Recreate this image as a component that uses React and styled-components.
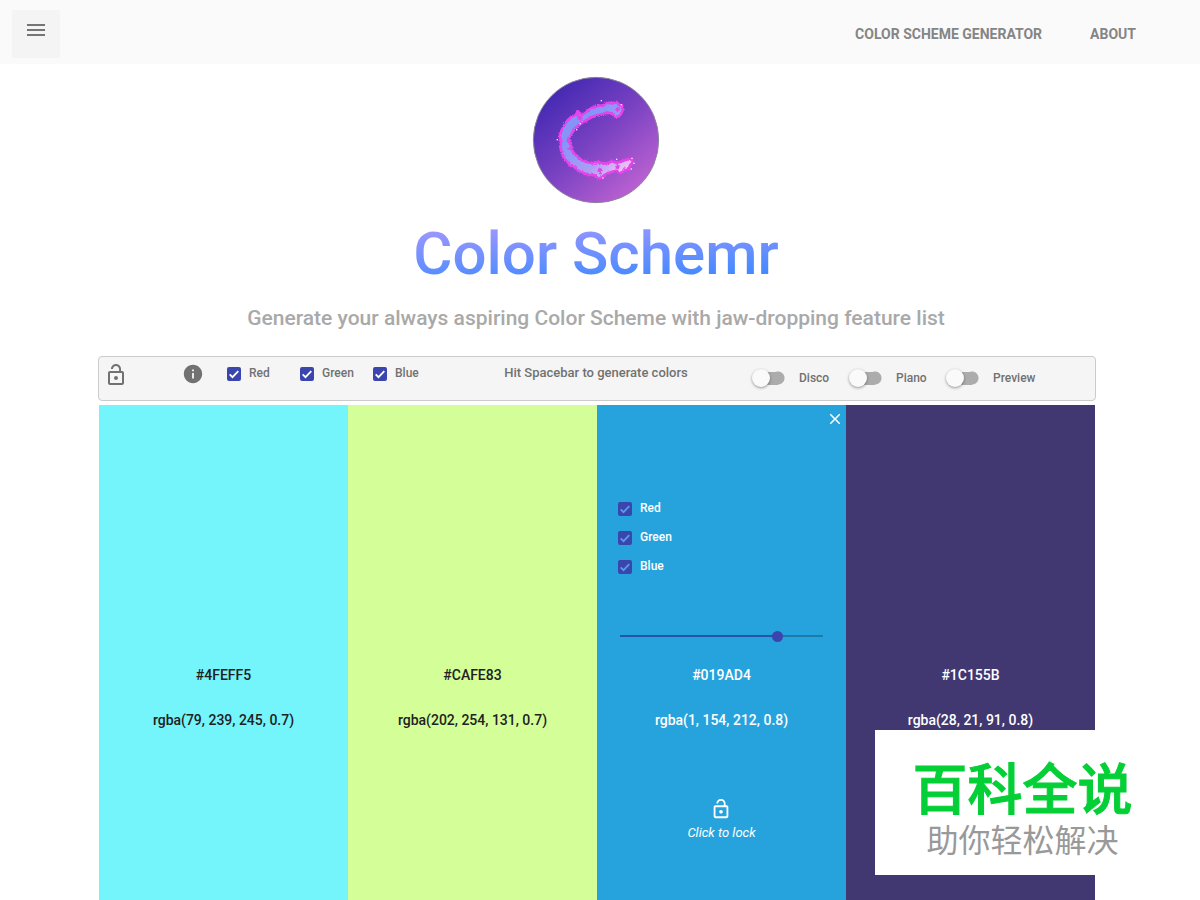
import React, { useState } from "react";
import styled, { createGlobalStyle } from "styled-components";

const GlobalStyle = createGlobalStyle`
  *, *::before, *::after { box-sizing: border-box; }
  body {
    margin: 0;
    background: #ffffff;
    font-family: Roboto, "Noto Sans CJK SC", sans-serif;
    font-weight: 500;
  }
  h1, h2, p { margin: 0; }
  button {
    border: 0;
    padding: 0;
    background: none;
    color: inherit;
    font: inherit;
    cursor: pointer;
  }
`;

const Page = styled.div`
  position: relative;
  display: flex;
  flex-direction: column;
  min-height: 100vh;
`;

const TopBar = styled.header`
  display: flex;
  align-items: center;
  justify-content: space-between;
  height: 64px;
  padding: 4px 64px 0 12px;
  background: #fafafa;
`;

const MenuButton = styled.button`
  display: flex;
  justify-content: center;
  width: 48px;
  height: 48px;
  && { padding-top: 8px; background: #f4f4f4; }
  && { color: #757575; }
`;

const Nav = styled.nav`
  display: flex;
  gap: 48px;
`;

const NavLink = styled.a`
  color: #858585;
  font-size: 14px;
  font-weight: 700;
  line-height: 20px;
  text-decoration: none;
`;

const Hero = styled.section`
  display: flex;
  flex-direction: column;
  align-items: center;
  padding: 12px 8px 0 0;
`;

const Title = styled.h1`
  margin-top: 12px;
  font-size: 60px;
  font-weight: 500;
  line-height: 76px;
  color: transparent;
  background: linear-gradient(177deg, #a598ff 10%, #448aff 78%);
  background-clip: text;
`;

const Subtitle = styled.h2`
  margin-top: 12px;
  color: #a9a9a9;
  font-size: 21px;
  font-weight: 500;
  line-height: 28px;
`;

const Generator = styled.main`
  display: flex;
  flex: 1;
  flex-direction: column;
  gap: 4px;
  padding: 24px 104px 0 98px;
`;

const Toolbar = styled.div`
  display: grid;
  grid-template-columns: 78fr 45fr 219fr 306fr 343fr;
  height: 45px;
  padding: 6px 0 0 5px;
  border: 1px solid #cbcbcb;
  border-radius: 4px;
  background: #f5f5f5;
  color: #717171;
  font-size: 12px;
  line-height: 20px;
`;

const IconButton = styled.button`
  display: flex;
  align-items: flex-start;
  justify-content: flex-start;
`;

const CheckGroup = styled.div`
  display: flex;
  flex-direction: ${(p) => (p.$stacked ? "column" : "row")};
  gap: ${(p) => (p.$stacked ? "9px" : "0")};
`;

const CheckLabel = styled.label`
  display: flex;
  align-items: center;
  gap: 8px;
  width: 73px;
  height: 20px;
  line-height: 20px;
`;

const CheckBox = styled.span`
  display: grid;
  width: 14px;
  height: 14px;
  margin-top: 2px;
  & > * { grid-area: 1 / 1; }
  svg { pointer-events: none; }
`;

const CheckInput = styled.input`
  width: 14px;
  height: 14px;
  margin: 0;
  appearance: none;
  border: 2px solid #3a46ad;
  border-radius: 2px;
  &:checked { background: #3a46ad; }
  &:not(:checked) + svg { visibility: hidden; }
`;

const Hint = styled.p`
  padding-right: 6px;
  text-align: center;
  font-size: 13px;
`;

const SwitchGroup = styled.div`
  display: flex;
  padding-top: 5px;
`;

const SwitchLabel = styled.label`
  display: flex;
  align-items: center;
  gap: 14px;
  width: 97px;
  height: 20px;
`;

const SwitchInput = styled.input`
  display: flex;
  align-items: center;
  width: 33px;
  height: 18px;
  margin: 0;
  appearance: none;
  background: radial-gradient(circle at 26px 9px, #acacac 6px, transparent 7px),
    linear-gradient(#acacac, #acacac) 9px 3px / 17px 13px no-repeat;
  &::before {
    content: "";
    width: 18px;
    height: 18px;
    border-radius: 50%;
    background: #fafafa;
    box-shadow: 0 1px 3px rgba(0, 0, 0, 0.4);
  }
  &:checked { justify-content: flex-end; }
`;

const Palette = styled.div`
  display: grid;
  flex: 1;
  grid-template-columns: repeat(4, 1fr);
  min-height: 480px;
  padding: 0 1px;
`;

const Swatch = styled.section`
  display: flex;
  flex-direction: column;
  background: ${(p) => p.$fill};
  color: ${(p) => p.$ink};
  text-align: center;
`;

const Controls = styled.div`
  display: flex;
  flex-direction: column;
  height: 258px;
  padding: 0 21px;
  font-size: 12px;
  text-align: left;
`;

const CloseButton = styled.button`
  align-self: flex-end;
  width: 18px;
  height: 18px;
  margin: 5px -19px 70px 0;
`;

const Slider = styled.input`
  height: 12px;
  margin: 54px 2px 0;
  appearance: none;
  background: linear-gradient(90deg, #2553a8 78%, #1b7ca8 78%) center / 100% 2px no-repeat;
  &::-webkit-slider-thumb {
    width: 11px;
    height: 11px;
    appearance: none;
    border-radius: 50%;
    background: #3a46ad;
  }
`;

const ColorCode = styled.p`
  height: 45px;
  font-size: 14px;
  line-height: 24px;
`;

const LockButton = styled.button`
  display: flex;
  flex-direction: column;
  align-items: center;
  align-self: center;
  gap: 5px;
  margin-top: 45px;
  && {
    font-size: 13px;
    font-style: italic;
    font-weight: 400;
    line-height: 16px;
  }
`;

const Watermark = styled.aside`
  position: absolute;
  right: 30px;
  bottom: 25px;
  width: 295px;
  height: 145px;
  padding-top: 28px;
  background: #ffffff;
  text-align: center;
`;

const WatermarkName = styled.p`
  color: #05cf36;
  font-size: 55px;
  font-weight: 500;
  line-height: 64px;
  -webkit-text-stroke: 1px #05cf36;
`;

const WatermarkLine = styled.p`
  color: #999999;
  font-size: 32px;
  font-weight: 400;
  line-height: 38px;
`;

const MenuIcon = () => (
  <svg width="24" height="24" viewBox="0 0 24 24" fill="currentColor" aria-hidden="true">
    <path d="M3 18h18v-2H3v2zm0-5h18v-2H3v2zm0-7v2h18V6H3z" />
  </svg>
);

const LockOpenIcon = ({ size }) => (
  <svg width={size} height={size} viewBox="0 0 24 24" fill="currentColor" aria-hidden="true">
    <path d="M12 17c1.1 0 2-.9 2-2s-.9-2-2-2-2 .9-2 2 .9 2 2 2zm6-9h-1V6c0-2.76-2.24-5-5-5S7 3.24 7 6h1.9c0-1.71 1.39-3.1 3.1-3.1 1.71 0 3.1 1.39 3.1 3.1v2H6c-1.1 0-2 .9-2 2v10c0 1.1.9 2 2 2h12c1.1 0 2-.9 2-2V10c0-1.1-.9-2-2-2zm0 12H6V10h12v10z" />
  </svg>
);

const InfoIcon = () => (
  <svg width="22" height="22" viewBox="0 0 24 24" fill="currentColor" aria-hidden="true">
    <path d="M12 2C6.48 2 2 6.48 2 12s4.48 10 10 10 10-4.48 10-10S17.52 2 12 2zm1 15h-2v-6h2v6zm0-8h-2V7h2v2z" />
  </svg>
);

const CloseIcon = () => (
  <svg width="18" height="18" viewBox="0 0 24 24" fill="currentColor" aria-hidden="true">
    <path d="M19 6.41L17.59 5 12 10.59 6.41 5 5 6.41 10.59 12 5 17.59 6.41 19 12 13.41 17.59 19 19 17.59 13.41 12z" />
  </svg>
);

const Logo = () => (
  <svg width="128" height="128" viewBox="36 33 384 384" role="img" aria-label="Color Schemr logo">
    <defs>
      <linearGradient id="disc" x1="0.15" y1="0.1" x2="0.85" y2="0.9">
        <stop offset="0" stopColor="#4329b2" />
        <stop offset="0.5" stopColor="#7a42c2" />
        <stop offset="1" stopColor="#bd62d2" />
      </linearGradient>
      <linearGradient id="brush" x1="0" y1="0" x2="1" y2="1">
        <stop offset="0.3" stopColor="#8794f7" />
        <stop offset="0.65" stopColor="#ab9ff5" />
        <stop offset="0.9" stopColor="#f3c2f5" />
      </linearGradient>
      <filter id="ragged" x="-10%" y="-10%" width="120%" height="120%">
        <feTurbulence type="fractalNoise" baseFrequency="0.28" numOctaves="2" seed="4" />
        <feDisplacementMap in="SourceGraphic" scale="9" xChannelSelector="R" yChannelSelector="G" />
      </filter>
    </defs>
    <circle cx="228" cy="225" r="188" fill="url(#disc)" stroke="#8b829b" strokeWidth="3" />
    <g filter="url(#ragged)">
      <path
        d="M172 139L186 149L200 140L212 130L222 127L235 122L250 121L262 113L278 115L290 111L297 120L307 124L308 135L302 148L295 155L285 155L277 146L262 143L248 146L232 151L214 157L200 165L188 172L178 180L165 190L156 204L149 218L147 229L153 241L155 253L161 264L174 276L185 285L200 291L218 295L232 291L248 295L262 295L276 289L290 293L306 289L322 283L337 283L338 292L330 301L326 314L313 317L302 325L288 317L274 321L258 327L245 337L234 341L225 331L208 329L192 325L177 319L164 307L150 301L142 290L132 280L125 263L121 246L123 228L119 212L125 196L133 180L143 166L156 154L168 150Z"
        fill="url(#brush)"
        stroke="#e344ea"
        strokeWidth="8"
        strokeLinejoin="round"
      />
      <path
        d="M176 150l10 8-4 8-8-6zM143 220l6 4-3 8-6-4zM148 246l6-2-2 8-6 0zM290 300l8 3-4 8-7-3zM238 310l8 4-6 6-6-2zM292 128l7 3-6 8-5-5zM236 326l10 0M310 312l6-6"
        fill="#b658e8"
        stroke="#e344ea"
        strokeWidth="4"
      />
    </g>
    <g fill="#fbe5ff">
      <rect x="242" y="105" width="4" height="4" />
      <rect x="302" y="117" width="4" height="4" />
      <rect x="110" y="222" width="4" height="4" />
      <rect x="179" y="174" width="4" height="4" />
      <rect x="168" y="192" width="4" height="4" />
      <rect x="334" y="278" width="4" height="4" />
      <rect x="340" y="293" width="4" height="4" />
      <rect x="247" y="337" width="4" height="4" />
      <rect x="332" y="310" width="4" height="4" />
      <rect x="288" y="281" width="4" height="4" />
    </g>
  </svg>
);

function Check({ label, tick = "#ffffff" }) {
  return (
    <CheckLabel>
      <CheckBox>
        <CheckInput type="checkbox" defaultChecked />
        <svg width="14" height="14" viewBox="0 0 14 14" fill="none" stroke={tick} strokeWidth="1.8">
          <path d="M2.7 7.3l2.8 2.8 5.8-6" />
        </svg>
      </CheckBox>
      {label}
    </CheckLabel>
  );
}

const CHANNELS = ["Red", "Green", "Blue"];
const MODES = ["Disco", "Piano", "Preview"];
const COLORS = [
  { hex: "#4FEFF5", rgba: "rgba(79, 239, 245, 0.7)", fill: "#73f5fb", ink: "#212121" },
  { hex: "#CAFE83", rgba: "rgba(202, 254, 131, 0.7)", fill: "#d4fe98", ink: "#212121" },
  { hex: "#019AD4", rgba: "rgba(1, 154, 212, 0.8)", fill: "#26a3dc", ink: "#ffffff", open: true },
  { hex: "#1C155B", rgba: "rgba(28, 21, 91, 0.8)", fill: "#413871", ink: "#ffffff" },
];

function ColorSwatch({ color }) {
  const [open, setOpen] = useState(Boolean(color.open));
  return (
    <Swatch $fill={color.fill} $ink={color.ink}>
      <Controls>
        {open && (
          <>
            <CloseButton aria-label="Close" onClick={() => setOpen(false)}>
              <CloseIcon />
            </CloseButton>
            <CheckGroup $stacked>
              {CHANNELS.map((name) => (
                <Check key={name} label={name} tick="#5b9be8" />
              ))}
            </CheckGroup>
            <Slider type="range" aria-label="Opacity" min="0" max="100" defaultValue="79" />
          </>
        )}
      </Controls>
      <ColorCode>{color.hex}</ColorCode>
      <ColorCode>{color.rgba}</ColorCode>
      {open && (
        <LockButton>
          <LockOpenIcon size={22} />
          Click to lock
        </LockButton>
      )}
    </Swatch>
  );
}

export default function App() {
  return (
    <Page>
      <GlobalStyle />
      <TopBar>
        <MenuButton aria-label="Menu">
          <MenuIcon />
        </MenuButton>
        <Nav>
          <NavLink href="#generator">COLOR SCHEME GENERATOR</NavLink>
          <NavLink href="#about">ABOUT</NavLink>
        </Nav>
      </TopBar>
      <Hero>
        <Logo />
        <Title>Color Schemr</Title>
        <Subtitle>Generate your always aspiring Color Scheme with jaw-dropping feature list</Subtitle>
      </Hero>
      <Generator id="generator">
        <Toolbar>
          <IconButton aria-label="Unlock all">
            <LockOpenIcon size={24} />
          </IconButton>
          <IconButton aria-label="Information">
            <InfoIcon />
          </IconButton>
          <CheckGroup>
            {CHANNELS.map((name) => (
              <Check key={name} label={name} />
            ))}
          </CheckGroup>
          <Hint>Hit Spacebar to generate colors</Hint>
          <SwitchGroup>
            {MODES.map((name) => (
              <SwitchLabel key={name}>
                <SwitchInput type="checkbox" role="switch" />
                {name}
              </SwitchLabel>
            ))}
          </SwitchGroup>
        </Toolbar>
        <Palette>
          {COLORS.map((color) => (
            <ColorSwatch key={color.hex} color={color} />
          ))}
        </Palette>
      </Generator>
      <Watermark>
        <WatermarkName>百科全说</WatermarkName>
        <WatermarkLine>助你轻松解决</WatermarkLine>
      </Watermark>
    </Page>
  );
}
